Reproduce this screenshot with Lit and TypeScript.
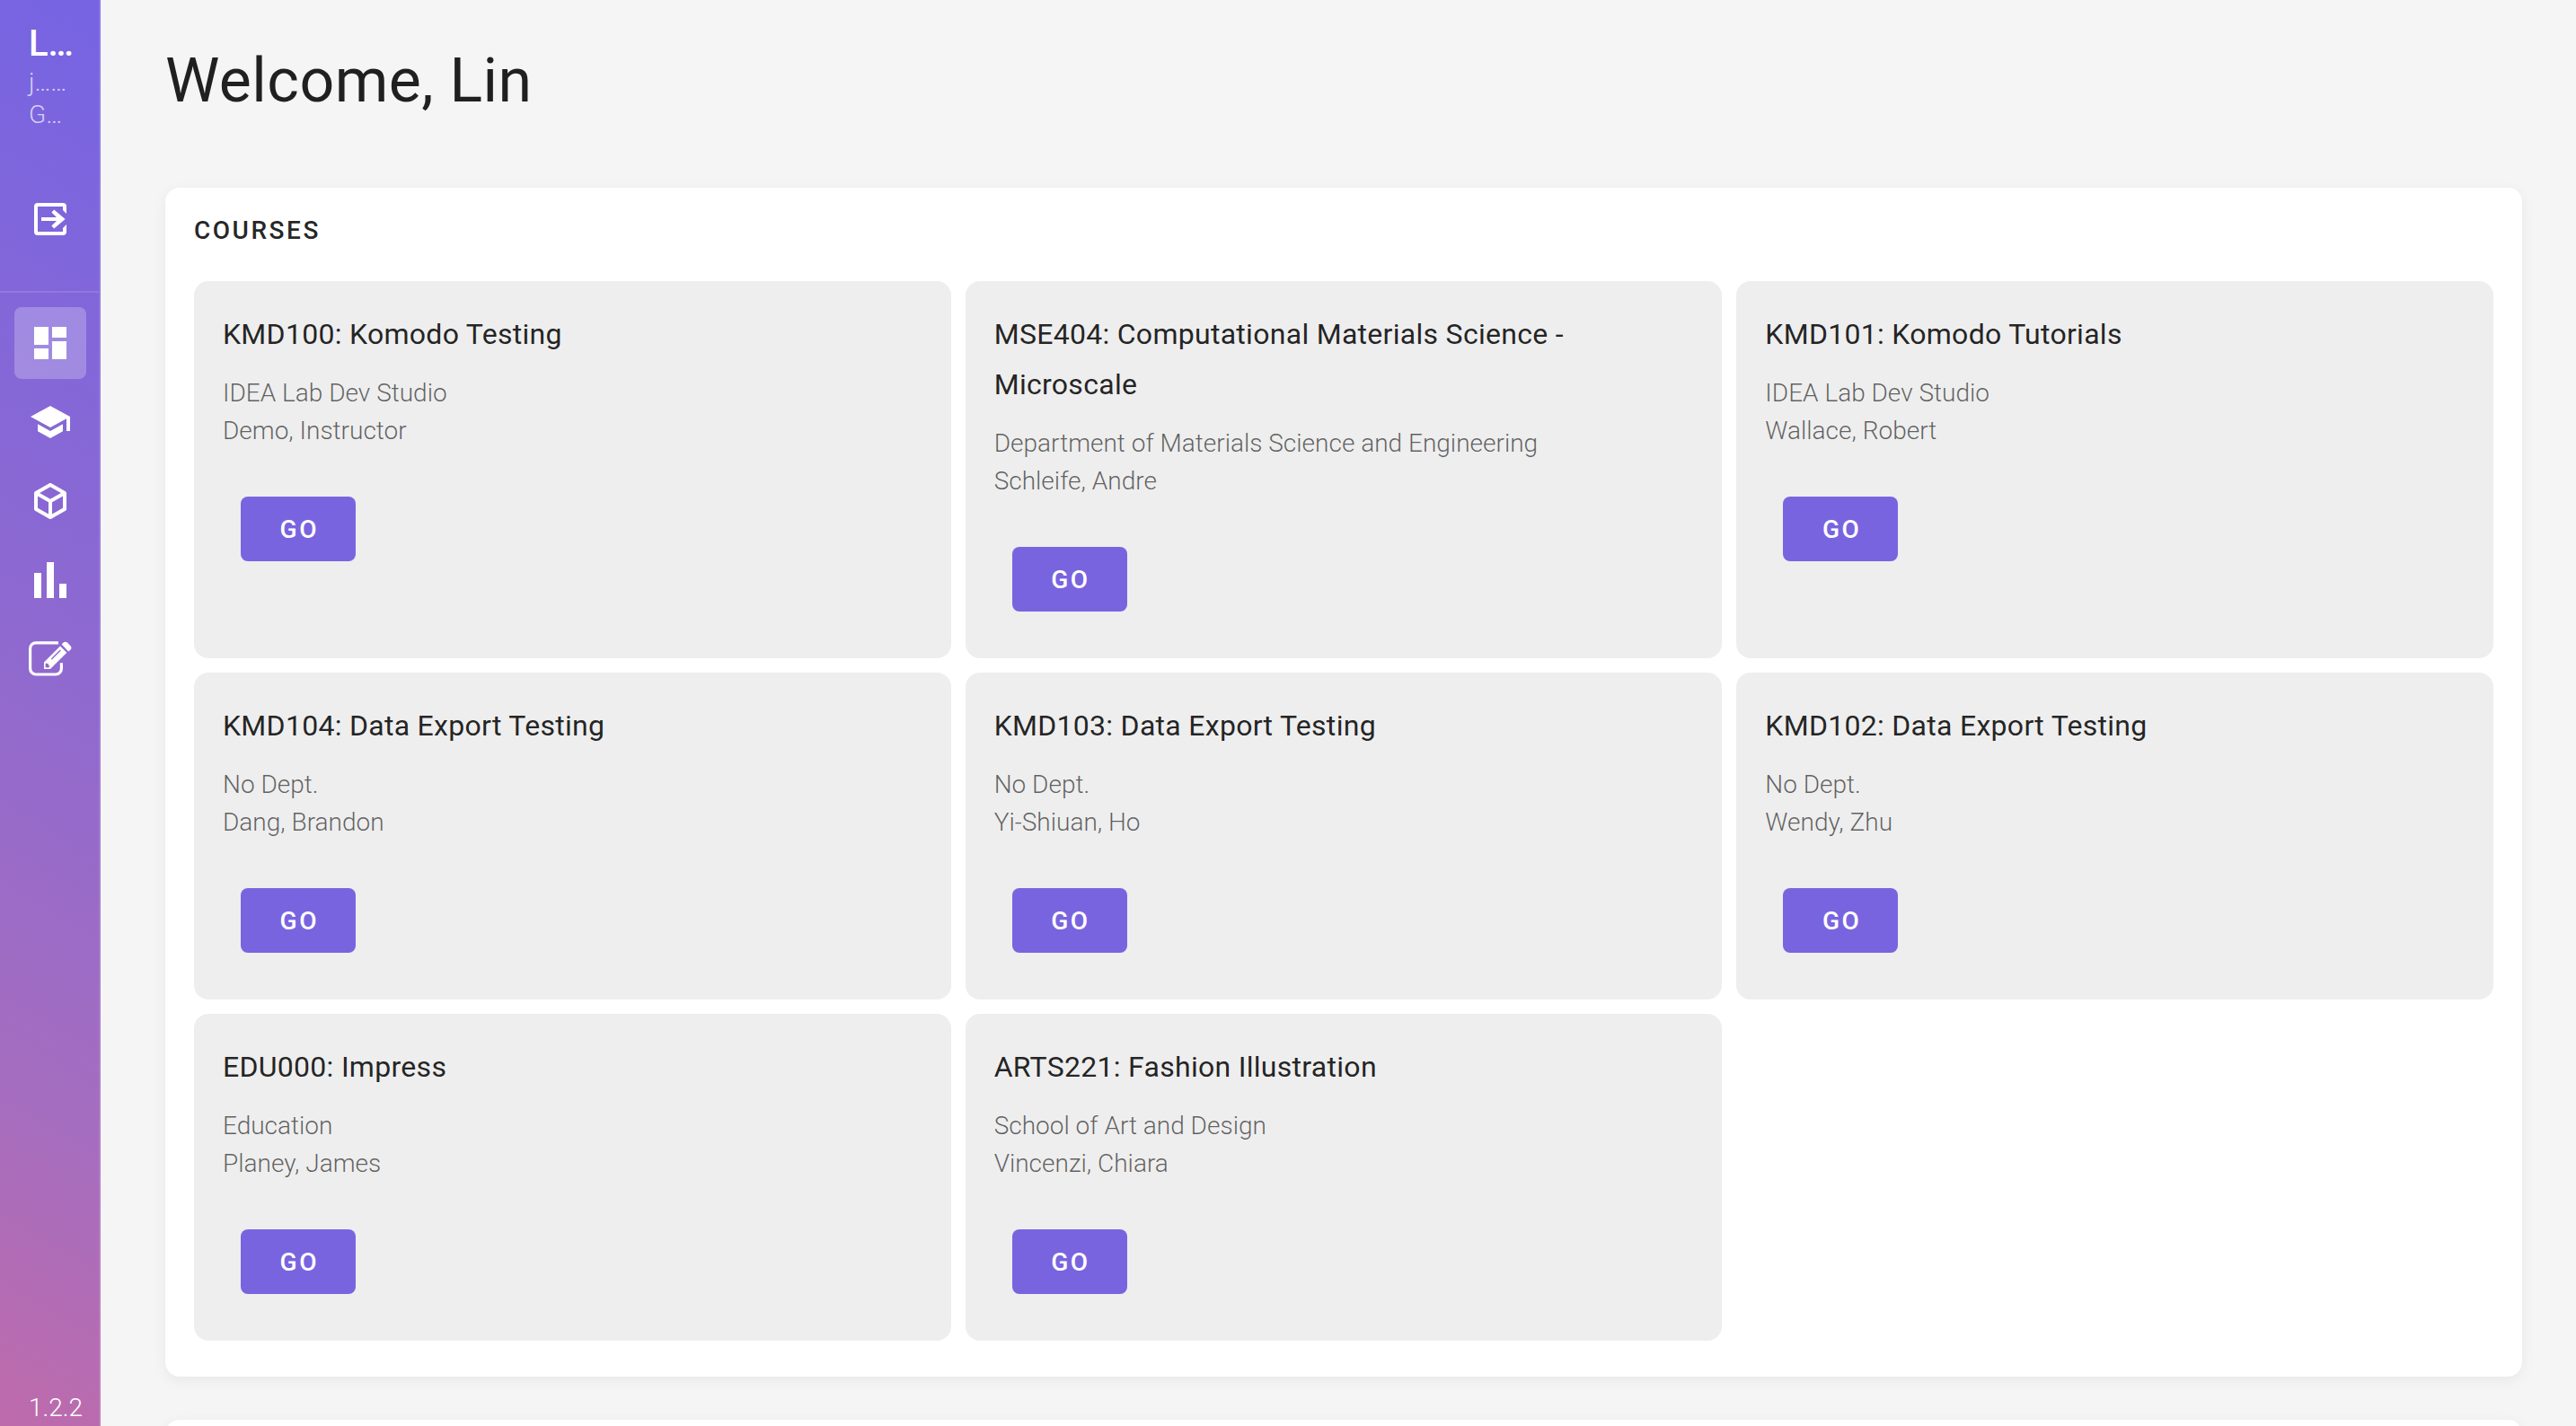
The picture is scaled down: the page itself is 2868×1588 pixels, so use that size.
import { LitElement, html, css, svg } from "lit";
import { customElement, property } from "lit/decorators.js";
import { classMap } from "lit/directives/class-map.js";

interface Course {
  title: string;
  department: string;
  instructor: string;
}

const COURSES: Course[] = [
  { title: "KMD100: Komodo Testing", department: "IDEA Lab Dev Studio", instructor: "Demo, Instructor" },
  {
    title: "MSE404: Computational Materials Science - Microscale",
    department: "Department of Materials Science and Engineering",
    instructor: "Schleife, Andre",
  },
  { title: "KMD101: Komodo Tutorials", department: "IDEA Lab Dev Studio", instructor: "Wallace, Robert" },
  { title: "KMD104: Data Export Testing", department: "No Dept.", instructor: "Dang, Brandon" },
  { title: "KMD103: Data Export Testing", department: "No Dept.", instructor: "Yi-Shiuan, Ho" },
  { title: "KMD102: Data Export Testing", department: "No Dept.", instructor: "Wendy, Zhu" },
  { title: "EDU000: Impress", department: "Education", instructor: "Planey, James" },
  { title: "ARTS221: Fashion Illustration", department: "School of Art and Design", instructor: "Vincenzi, Chiara" },
];

const exitIcon = svg`
  <path d="M19 3H5a2 2 0 0 0-2 2v14a2 2 0 0 0 2 2h14a2 2 0 0 0 2-2v-4l-2 2v2H5V5h14v2l2 2V5a2 2 0 0 0-2-2z"/>
  <path d="M14.100 17.200l-1.400-1.400 2.800-2.800H7v-2h8.500l-2.800-2.800 1.400-1.400L20.300 12z"/>`;

const NAV = [
  { label: "Dashboard", active: true, icon: svg`<path d="M13 3v6h8V3m-8 18h8V11h-8M3 21h8v-6H3m0-2h8V3H3v10z"/>` },
  { label: "Courses", active: false, icon: svg`<path d="M12 3L1 9l11 6 9-4.910V17h2V9M5 13.180v4L12 21l7-3.820v-4L12 17l-7-3.820z"/>` },
  {
    label: "Modules",
    active: false,
    icon: svg`<path d="M21 16.500c0 .380-.210.710-.530.880l-7.900 4.440c-.160.120-.360.180-.570.180s-.410-.060-.570-.180l-7.900-4.440A.991.991 0 0 1 3 16.500v-9c0-.380.210-.710.530-.880l7.900-4.440c.160-.120.360-.180.570-.180s.410.060.570.180l7.900 4.440c.320.170.530.500.530.880v9M12 4.150L6.040 7.500 12 10.850l5.960-3.350L12 4.150M5 15.910l6 3.380v-6.710L5 9.210v6.700m14 0v-6.700l-6 3.370v6.710l6-3.380z"/>`,
  },
  { label: "Reports", active: false, icon: svg`<path d="M3 22V8h4v14H3m7 0V2h4v20h-4m7 0v-8h4v8h-4z"/>` },
  {
    label: "Editor",
    active: false,
    icon: svg`
      <path fill="none" stroke="#fff" stroke-width="1.600" d="M16.500 2.900H4a3.200 3.200 0 0 0-3.200 3.200v11.200A3.200 3.200 0 0 0 4 20.500h11a3.200 3.200 0 0 0 3.200-3.200v-3.200"/>
      <path fill-rule="evenodd" d="M17.500 4.700l3.700 3.700-9.200 9.100H8.500v-3.700zM10 14l-.700.700v1.900l1.700.100.900-.900-.800-.200-.100-1-1-.100zM12.400 11.700l.500.500 5-5-.500-.5z"/>
      <path d="M18.300 3.800l1-1q1.100-.900 2.200 0l1.800 1.900q.800 1.100 0 2.100l-1.200 1z"/>`,
  },
];

@customElement("course-card")
export class CourseCard extends LitElement {
  @property({ attribute: false }) course!: Course;

  static styles = css`
    :host {
      display: block;
      padding: 31px 32px 32px;
      border-radius: 16px;
      background: #eee;
    }
    .title {
      margin: 0;
      font-size: 32px;
      line-height: 56px;
      font-weight: 400;
      letter-spacing: 0.009em;
      color: rgba(0, 0, 0, 0.87);
    }
    .details {
      margin: 17px 0 0;
      font-size: 28px;
      line-height: 42px;
      font-weight: 300;
      color: rgba(0, 0, 0, 0.6);
    }
    .go {
      display: block;
      min-width: 128px;
      height: 72px;
      margin: 52px 20px 20px;
      padding: 0 32px;
      border: 0;
      border-radius: 8px;
      background: #7964e0;
      color: #fff;
      font-family: inherit;
      font-size: 28px;
      font-weight: 500;
      letter-spacing: 0.09em;
      text-indent: 0.09em;
      cursor: pointer;
    }
  `;

  render() {
    return html`
      <h3 class="title">${this.course.title}</h3>
      <p class="details">${this.course.department}<br />${this.course.instructor}</p>
      <button class="go" type="button">GO</button>
    `;
  }
}

@customElement("app-root")
export class AppRoot extends LitElement {
  static styles = css`
    :host {
      display: flex;
      height: 100vh;
      overflow: hidden;
      background: #f5f5f5;
      font-family: Roboto, "Liberation Sans", sans-serif;
      color: rgba(0, 0, 0, 0.87);
    }
    .sidebar {
      box-sizing: border-box;
      flex: none;
      display: flex;
      flex-direction: column;
      width: 112px;
      border-right: 2px solid rgba(255, 255, 255, 0.12);
      background: linear-gradient(30deg, #be6bab, #a56dbf 23%, #8e69d0 55%, #7764e2 98%) border-box;
      color: #fff;
    }
    .user {
      padding: 24px 24px 0 32px;
    }
    .name,
    .line {
      margin: 0;
      white-space: nowrap;
    }
    .name {
      font-size: 40px;
      line-height: 50px;
      font-weight: 500;
    }
    .line {
      font-size: 28px;
      line-height: 36px;
      font-weight: 300;
      color: rgba(255, 255, 255, 0.7);
    }
    .tools {
      padding: 58px 16px 40px;
      border-bottom: 2px solid rgba(255, 255, 255, 0.12);
    }
    .nav {
      display: flex;
      flex-direction: column;
      gap: 8px;
      padding: 16px 14px 16px 16px;
    }
    .item {
      box-sizing: border-box;
      display: flex;
      align-items: center;
      justify-content: center;
      width: 80px;
      height: 80px;
      padding: 0;
      border: 0;
      border-radius: 8px;
      background: none;
      color: #fff;
      cursor: pointer;
    }
    .item.active {
      background: rgba(255, 255, 255, 0.24);
    }
    .icon {
      width: 48px;
      height: 48px;
      fill: currentColor;
    }
    .version {
      margin: auto 0 0;
      padding-left: 32px;
      font-size: 28px;
      line-height: 40px;
      font-weight: 300;
    }
    .main {
      flex: 1;
      min-width: 0;
      padding: 50px 60px 0 72px;
    }
    .welcome {
      margin: 0 0 78px;
      font-size: 68px;
      line-height: 81px;
      font-weight: 400;
      letter-spacing: 0.007em;
    }
    .panel {
      margin-bottom: 48px;
      padding: 24px 32px 40px;
      border-radius: 16px;
      background: #fff;
      box-shadow: 0 4px 16px rgba(0, 0, 0, 0.06);
    }
    .heading {
      margin: 0 0 32px;
      font-size: 28px;
      line-height: 48px;
      font-weight: 500;
      letter-spacing: 0.09em;
    }
    .grid {
      display: grid;
      grid-template-columns: repeat(3, minmax(0, 1fr));
      gap: 16px;
    }
  `;

  render() {
    return html`
      <aside class="sidebar">
        <div class="user">
          <p class="name">L…</p>
          <p class="line">j……</p>
          <p class="line">G…</p>
        </div>
        <div class="tools">
          <button class="item" type="button" aria-label="Sign out">
            <svg class="icon" viewBox="0 0 24 24">${exitIcon}</svg>
          </button>
        </div>
        <nav class="nav">
          ${NAV.map(
            (entry) => html`
              <a class=${classMap({ item: true, active: entry.active })} href="#" aria-label=${entry.label}>
                <svg class="icon" viewBox="0 0 24 24">${entry.icon}</svg>
              </a>
            `,
          )}
        </nav>
        <p class="version">1.2.2</p>
      </aside>
      <main class="main">
        <h1 class="welcome">Welcome, Lin</h1>
        <section class="panel">
          <h2 class="heading">COURSES</h2>
          <div class="grid">${COURSES.map((course) => html`<course-card .course=${course}></course-card>`)}</div>
        </section>
        <section class="panel"></section>
      </main>
    `;
  }
}
